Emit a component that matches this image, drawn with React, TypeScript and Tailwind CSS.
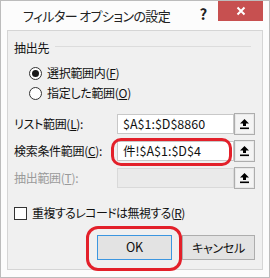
import React from "react";

function UpButton() {
  return (
    <div className="w-[21px] h-[22px] border border-[#adadad] bg-[#e8e8e8] p-[1px] flex">
      <div className="flex-1 bg-[#f4f4f4] flex items-center justify-center">
        <svg width="11" height="12" viewBox="0 0 11 12">
          <path d="M5.5 1 L10 5.5 L7 5.5 L7 8 L4 8 L4 5.5 L1 5.5 Z" fill="#000" />
          <rect x="1" y="9.5" width="9" height="1.6" fill="#000" />
        </svg>
      </div>
    </div>
  );
}

function Radio({ checked, label, u }: { checked?: boolean; label: string; u: string }) {
  return (
    <div className="h-[20px] flex items-center pl-[15px]">
      <div className="w-[13px] h-[13px] rounded-full border border-[#333] bg-white flex items-center justify-center">
        {checked && <div className="w-[7px] h-[7px] rounded-full bg-[#1a1a1a]" />}
      </div>
      <span className="ml-[5px] text-[12px] text-[#111] whitespace-nowrap">
        {label}(<span className="underline">{u}</span>)
      </span>
    </div>
  );
}

function RangeRow({
  label,
  u,
  value,
  disabled,
}: {
  label: string;
  u: string;
  value?: string;
  disabled?: boolean;
}) {
  return (
    <div className="h-[22px] flex items-center">
      <span
        className={`w-[103px] text-[12px] whitespace-nowrap ${disabled ? "text-[#9a9a9a]" : "text-[#111]"}`}
      >
        {label}(<span className="underline">{u}</span>):
      </span>
      <div
        className={`w-[117px] h-[20px] border flex items-center px-[5px] text-[12.5px] tracking-normal ${
          disabled ? "border-[#d9d9d9] bg-[#eaeaea]" : "border-[#c8c8c8] bg-white text-[#111]"
        }`}
      >
        {value}
      </div>
      <UpButton />
    </div>
  );
}

export default function App() {
  return (
    <div
      className="w-[270px] h-[278px] bg-[#fcfcfc] border border-[#bcbcbc] flex flex-col overflow-hidden relative tracking-[-0.3px] [font-feature-settings:'palt']"
      style={{ fontFamily: '"Noto Sans CJK JP", "Noto Sans", sans-serif' }}
    >
      {/* title bar */}
      <div className="h-[29px] flex items-start shrink-0">
        <div className="pl-[22px] pt-[5px] text-[13px] tracking-[-0.6px] text-[#222] whitespace-nowrap">
          フィルター オプションの設定
        </div>
        <div className="ml-auto flex items-start">
          <span className="text-[15px] font-bold text-[#222] mt-[2px] mr-[11px]">?</span>
          <div className="w-[45px] h-[20px] bg-[#c75050] flex items-center justify-center mr-[6px]">
            <svg width="10" height="10" viewBox="0 0 10 10">
              <path d="M1.5 1.5 L8.5 8.5 M8.5 1.5 L1.5 8.5" stroke="#fff" strokeWidth="2" />
            </svg>
          </div>
        </div>
      </div>

      {/* client area */}
      <div className="mx-[6px] mb-[7px] flex-1 bg-[#f0f0f0] border border-[#d5d5d5] flex flex-col px-[6px] pt-[9px]">
        <div className="h-[16px] flex items-center">
          <span className="text-[12px] text-[#111]">抽出先</span>
          <div className="flex-1 h-px bg-[#dcdcdc] ml-[6px] mr-[5px] -mt-[3px]" />
        </div>
        <div className="mt-[7px]">
          <Radio checked label="選択範囲内" u="F" />
          <Radio label="指定した範囲" u="O" />
        </div>
        <div className="mt-[10px] flex flex-col gap-[5px]">
          <RangeRow label="リスト範囲" u="L" value="$A$1:$D$8860" />
          <RangeRow label="検索条件範囲" u="C" value="件!$A$1:$D$4" />
          <RangeRow label="抽出範囲" u="T" disabled />
        </div>
        <div className="mt-[17px] h-[14px] flex items-center">
          <div className="w-[13px] h-[13px] border border-[#333] bg-white" />
          <span className="ml-[5px] text-[12px] tracking-[-0.6px] text-[#111] whitespace-nowrap">
            重複するレコードは無視する(<span className="underline">R</span>)
          </span>
        </div>
        <div className="mt-[15px] flex justify-end gap-[10px] pr-[1px]">
          <div className="w-[75px] h-[25px] border border-[#3c96e0] bg-[#e3e3e3] flex items-center justify-center text-[12.5px] text-[#111]">
            OK
          </div>
          <div className="w-[73px] h-[25px] border border-[#adadad] bg-[#e3e3e3] flex items-center justify-center text-[12px] text-[#111]">
            キャンセル
          </div>
        </div>
      </div>

      {/* red highlight marks */}
      <div className="absolute left-[110px] top-[137px] w-[121px] h-[28px] border-[3px] border-[#e3202a] rounded-[10px]" />
      <div className="absolute left-[85px] top-[225px] w-[96px] h-[45px] border-[3px] border-[#e3202a] rounded-[12px]" />
    </div>
  );
}
